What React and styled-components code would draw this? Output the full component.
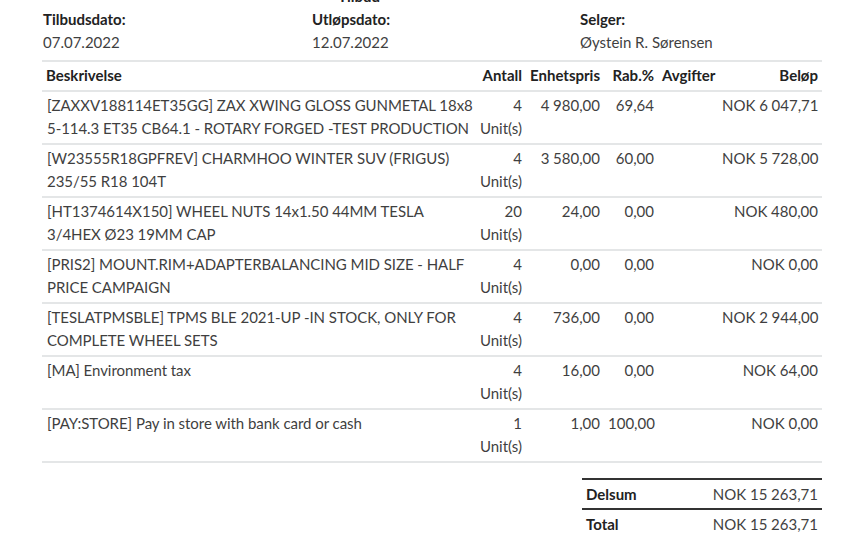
import React from 'react';
import styled, { createGlobalStyle } from 'styled-components';

const GlobalStyle = createGlobalStyle`
  body {
    margin: 0;
    background: #fff;
    font-family: Lato, "Open Sans", sans-serif;
    font-size: 15px;
    color: #3f3f3f;
  }
`;

const Page = styled.div`
  width: 864px;
  height: 551px;
  overflow: hidden;
  padding: 0 42px;
  box-sizing: border-box;
`;

const CutTitle = styled.div`
  height: 3px;
  overflow: hidden;
  display: flex;
  align-items: flex-end;
  padding-left: 296px;
  font-weight: 700;
  font-size: 15px;
  line-height: 13px;
  color: #222;
`;

const InfoRow = styled.div`
  display: grid;
  grid-template-columns: 269px 268px 1fr;
  padding-top: 5px;
`;

const InfoCell = styled.div`
  display: flex;
  flex-direction: column;
  line-height: 23px;
  padding-left: 1px;
`;

const InfoLabel = styled.strong`
  font-weight: 700;
  color: #222;
`;

const Table = styled.table`
  width: 780px;
  margin-top: 6px;
  border-collapse: collapse;
  table-layout: fixed;
  border-top: 2px solid #e4e6e7;
`;

const Th = styled.th`
  padding: 1px 4px 3px;
  height: 24px;
  font-weight: 700;
  color: #222;
  text-align: ${({ $align }) => $align || 'left'};
  border-bottom: 2px solid #e4e6e7;
  white-space: nowrap;
`;

const Td = styled.td`
  padding: 2px 4px 3px;
  line-height: 23px;
  vertical-align: top;
  text-align: ${({ $align }) => $align || 'left'};
  border-bottom: 2px solid #e4e6e7;
  white-space: ${({ $wrap }) => ($wrap ? 'normal' : 'nowrap')};
`;

const DescCell = styled(Td)`
  padding: 2px 0 3px 5px;
  letter-spacing: -0.05px;
`;

const Qty = styled.div`
  display: flex;
  flex-direction: column;
  align-items: flex-end;
`;

const Totals = styled.table`
  width: 240px;
  margin: 15px 0 0 auto;
  border-collapse: collapse;
  border-top: 2px solid #333;
`;

const TotalRow = styled.tr`
  border-top: ${({ $first }) => ($first ? 'none' : '2px solid #333')};
`;

const TotalLabel = styled.td`
  padding: 3px 4px;
  font-weight: 700;
  color: #222;
  line-height: 22px;
`;

const TotalValue = styled.td`
  padding: 3px 4px;
  text-align: right;
  line-height: 22px;
  white-space: nowrap;
`;

const nb = '\u202F';

const lines = [
  { desc: '[ZAXXV188114ET35GG] ZAX XWING GLOSS GUNMETAL 18x8 5-114.3 ET35 CB64.1 - ROTARY FORGED -TEST PRODUCTION', qty: '4', price: `4${nb}980,00`, disc: '69,64', total: `NOK${nb}6${nb}047,71` },
  { desc: '[W23555R18GPFREV] CHARMHOO WINTER SUV (FRIGUS) 235/55 R18 104T', qty: '4', price: `3${nb}580,00`, disc: '60,00', total: `NOK${nb}5${nb}728,00` },
  { desc: '[HT1374614X150] WHEEL NUTS 14x1.50 44MM TESLA 3/4HEX Ø23 19MM CAP', qty: '20', price: '24,00', disc: '0,00', total: `NOK${nb}480,00` },
  { desc: '[PRIS2] MOUNT.RIM+ADAPTERBALANCING MID SIZE - HALF PRICE CAMPAIGN', qty: '4', price: '0,00', disc: '0,00', total: `NOK${nb}0,00` },
  { desc: '[TESLATPMSBLE] TPMS BLE 2021-UP -IN STOCK, ONLY FOR COMPLETE WHEEL SETS', qty: '4', price: '736,00', disc: '0,00', total: `NOK${nb}2${nb}944,00` },
  { desc: '[MA] Environment tax', qty: '4', price: '16,00', disc: '0,00', total: `NOK${nb}64,00` },
  { desc: '[PAY:STORE] Pay in store with bank card or cash', qty: '1', price: '1,00', disc: '100,00', total: `NOK${nb}0,00` },
];

const App = () => (
  <Page>
    <GlobalStyle />
    <CutTitle>Tilbud</CutTitle>
    <InfoRow>
      <InfoCell>
        <InfoLabel>Tilbudsdato:</InfoLabel>
        <span>07.07.2022</span>
      </InfoCell>
      <InfoCell>
        <InfoLabel>Utløpsdato:</InfoLabel>
        <span>12.07.2022</span>
      </InfoCell>
      <InfoCell>
        <InfoLabel>Selger:</InfoLabel>
        <span>Øystein R. Sørensen</span>
      </InfoCell>
    </InfoRow>
    <Table>
      <colgroup>
        <col style={{ width: 432 }} />
        <col style={{ width: 52 }} />
        <col style={{ width: 78 }} />
        <col style={{ width: 54 }} />
        <col style={{ width: 60 }} />
        <col style={{ width: 104 }} />
      </colgroup>
      <thead>
        <tr>
          <Th>Beskrivelse</Th>
          <Th $align="right">Antall</Th>
          <Th $align="right">Enhetspris</Th>
          <Th $align="right">Rab.%</Th>
          <Th>Avgifter</Th>
          <Th $align="right">Beløp</Th>
        </tr>
      </thead>
      <tbody>
        {lines.map((l) => (
          <tr key={l.desc}>
            <DescCell $wrap>{l.desc}</DescCell>
            <Td $align="right">
              <Qty>
                <span>{l.qty}</span>
                <span>Unit(s)</span>
              </Qty>
            </Td>
            <Td $align="right">{l.price}</Td>
            <Td $align="right">{l.disc}</Td>
            <Td />
            <Td $align="right">{l.total}</Td>
          </tr>
        ))}
      </tbody>
    </Table>
    <Totals>
      <tbody>
        <TotalRow $first>
          <TotalLabel>Delsum</TotalLabel>
          <TotalValue>NOK 15{nb}263,71</TotalValue>
        </TotalRow>
        <TotalRow>
          <TotalLabel>Total</TotalLabel>
          <TotalValue>NOK 15{nb}263,71</TotalValue>
        </TotalRow>
      </tbody>
    </Totals>
  </Page>
);

export default App;
